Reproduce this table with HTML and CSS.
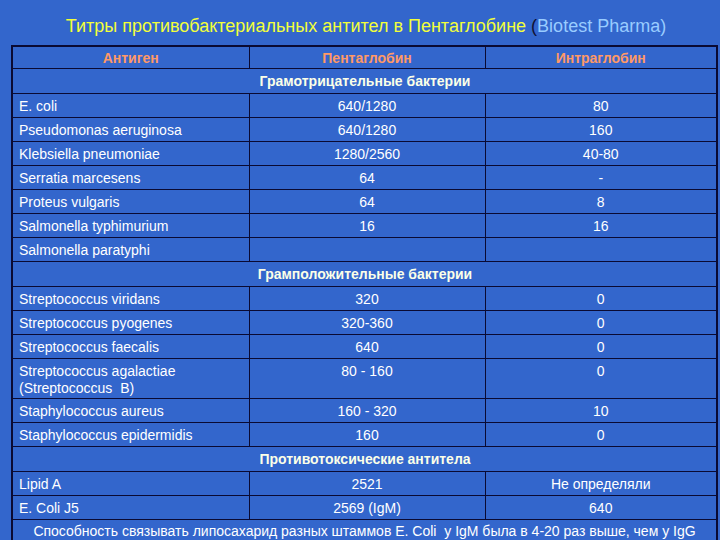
FILE: index.html
```html
<!DOCTYPE html>
<html lang="ru">
<head>
<meta charset="utf-8">
<link rel="stylesheet" href="styles.css">
</head>
<body>
<h1 class="title">Титры противобактериальных антител в Пентаглобине <span class="paren">(</span><span class="brand">Biotest Pharma)</span></h1>
<table class="grid">
  <colgroup><col class="c1"><col class="c2"><col class="c3"></colgroup>
  <tr class="head"><th>Антиген</th><th>Пентаглобин</th><th>Интраглобин</th></tr>
  <tr class="sect"><td colspan="3">Грамотрицательные бактерии</td></tr>
  <tr><td>E. coli</td><td>640/1280</td><td>80</td></tr>
  <tr><td>Pseudomonas aeruginosa</td><td>640/1280</td><td>160</td></tr>
  <tr><td>Klebsiella pneumoniae</td><td>1280/2560</td><td>40-80</td></tr>
  <tr><td>Serratia marcesens</td><td>64</td><td>-</td></tr>
  <tr><td>Proteus vulgaris</td><td>64</td><td>8</td></tr>
  <tr><td>Salmonella typhimurium</td><td>16</td><td>16</td></tr>
  <tr><td>Salmonella paratyphi</td><td></td><td></td></tr>
  <tr class="sect"><td colspan="3">Грамположительные бактерии</td></tr>
  <tr><td>Streptococcus viridans</td><td>320</td><td>0</td></tr>
  <tr><td>Streptococcus pyogenes</td><td>320-360</td><td>0</td></tr>
  <tr><td>Streptococcus faecalis</td><td>640</td><td>0</td></tr>
  <tr class="tall"><td>Streptococcus agalactiae<br>(Streptococcus&nbsp; B)</td><td>80 - 160</td><td>0</td></tr>
  <tr><td>Staphylococcus aureus</td><td>160 - 320</td><td>10</td></tr>
  <tr><td>Staphylococcus epidermidis</td><td>160</td><td>0</td></tr>
  <tr class="sect"><td colspan="3">Противотоксические антитела</td></tr>
  <tr><td>Lipid A</td><td>2521</td><td>Не определяли</td></tr>
  <tr><td>E. Coli J5</td><td>2569 (IgM)</td><td>640</td></tr>
  <tr class="note"><td colspan="3">Способность связывать липосахарид разных штаммов E. Coli&nbsp; у IgM была в 4-20 раз выше, чем у IgG</td></tr>
</table>
</body>
</html>
```
FILE: styles.css
```css
html, body {
  margin: 0;
  padding: 0;
  background: #3366cc;
  font-family: "Liberation Sans", Arial, sans-serif;
  overflow: hidden;
}
body {
  width: 720px;
  height: 540px;
}
.title {
  margin: 0;
  padding: 16px 0 0 12px;
  height: 45px;
  box-sizing: border-box;
  text-align: center;
  font-size: 18px;
  font-weight: normal;
  line-height: 20px;
  color: #f2ff3a;
}
.paren { color: #111133; }
.brand { color: #99ccff; }
.grid {
  margin-left: 11px;
  width: 705px;
  border-collapse: collapse;
  border: 2px solid #0a0a33;
  table-layout: fixed;
}
.c1 { width: 237px; }
.c2 { width: 236px; }
.c3 { width: 232px; }
.grid td, .grid th {
  border: 1px solid #0a0a33;
  height: 24px;
  padding: 1px 5px 0 5px;
  font-size: 14px;
  color: #ffffff;
  vertical-align: top;
  line-height: 22px;
  text-align: center;
  box-sizing: border-box;
}
.grid td:first-child { text-align: left; padding-left: 6px; }
.head th {
  color: #ff9966;
  font-weight: bold;
  font-size: 14px;
  height: 20px;
  line-height: 20px;
  padding-top: 1px;
  padding-bottom: 0;
}
.sect td, .grid .sect td:first-child {
  text-align: center;
  font-weight: bold;
  font-size: 14px;
  color: #fbffe8;
  line-height: 23px;
  padding-top: 1px;
}
.tall td {
  height: 40px;
  line-height: 17px;
  padding-top: 4px;
}
.note td, .grid .note td:first-child {
  text-align: center;
  font-size: 14px;
  line-height: 22px;
  padding: 0;
  white-space: nowrap;
}
```
